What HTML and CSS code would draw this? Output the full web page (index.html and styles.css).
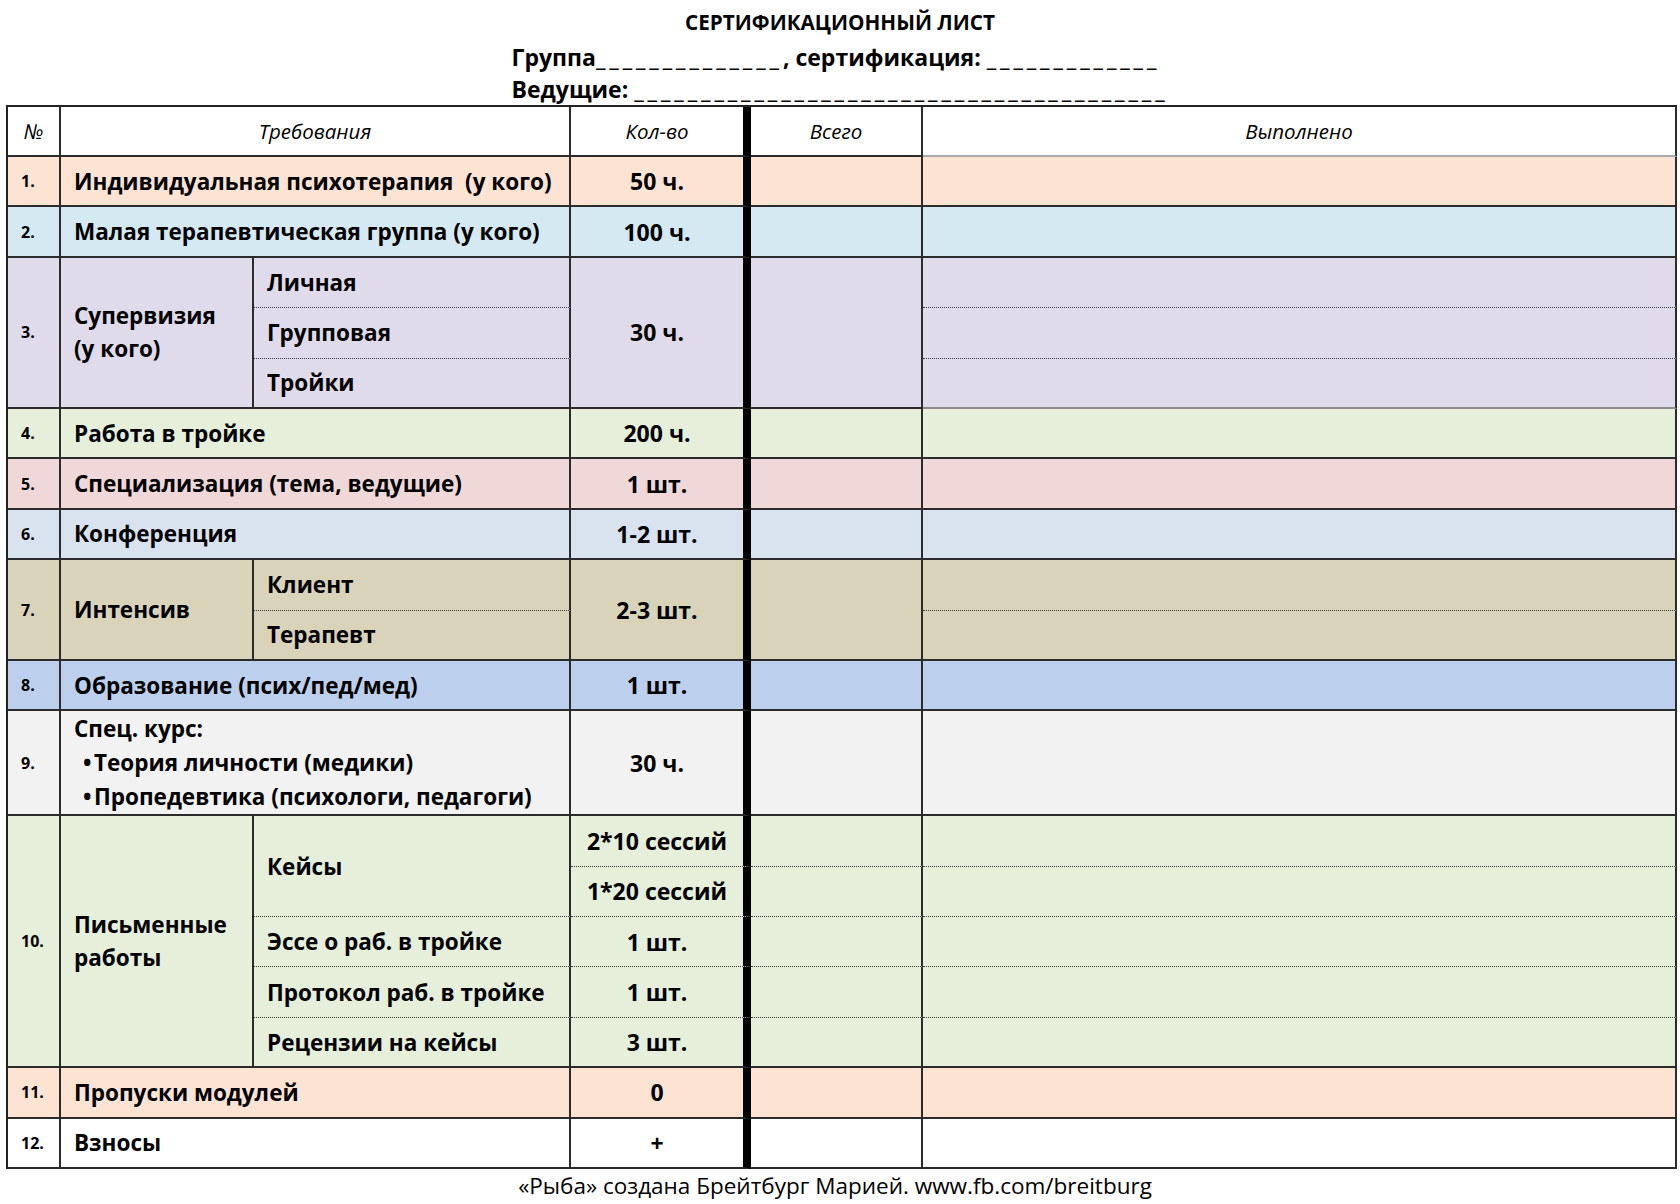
FILE: index.html
```html
<!DOCTYPE html>
<html lang="ru">
<head>
<meta charset="utf-8">
<title>Сертификационный лист</title>
<link rel="stylesheet" href="styles.css">
</head>
<body>
<div class="page">
  <header class="head">
    <h1 class="title">СЕРТИФИКАЦИОННЫЙ ЛИСТ</h1>
    <div class="fields">
      <div class="line">Группа<span class="blank">______________</span>, сертификация: <span class="blank">_____________</span></div>
      <div class="line">Ведущие: <span class="blank">________________________________________</span></div>
    </div>
  </header>

  <div class="sheet">
    <!-- header -->
    <div class="cell hd">№</div>
    <div class="cell hd span2">Требования</div>
    <div class="cell hd qty">Кол-во</div>
    <div class="cell hd">Всего</div>
    <div class="cell hd done-hd">Выполнено</div>

    <!-- 1 -->
    <div class="cell num o">1.</div>
    <div class="cell o span2">Индивидуальная психотерапия&nbsp; (у кого)</div>
    <div class="cell qty o">50 ч.</div>
    <div class="cell o"></div>
    <div class="cell o"></div>

    <!-- 2 -->
    <div class="cell num b">2.</div>
    <div class="cell b span2">Малая терапевтическая группа (у кого)</div>
    <div class="cell qty b">100 ч.</div>
    <div class="cell b"></div>
    <div class="cell b"></div>

    <!-- 3 -->
    <div class="cell num l rs3">3.</div>
    <div class="cell l rs3 wrap">Супервизия<br>(у кого)</div>
    <div class="cell l dot">Личная</div>
    <div class="cell qty l rs3">30 ч.</div>
    <div class="cell l rs3"></div>
    <div class="cell l dot"></div>
    <div class="cell l dot">Групповая</div>
    <div class="cell l dot"></div>
    <div class="cell l">Тройки</div>
    <div class="cell l soft"></div>

    <!-- 4 -->
    <div class="cell num g">4.</div>
    <div class="cell g span2">Работа в тройке</div>
    <div class="cell qty g">200 ч.</div>
    <div class="cell g"></div>
    <div class="cell g"></div>

    <!-- 5 -->
    <div class="cell num p">5.</div>
    <div class="cell p span2">Специализация (тема, ведущие)</div>
    <div class="cell qty p">1 шт.</div>
    <div class="cell p"></div>
    <div class="cell p"></div>

    <!-- 6 -->
    <div class="cell num s">6.</div>
    <div class="cell s span2">Конференция</div>
    <div class="cell qty s">1-2 шт.</div>
    <div class="cell s"></div>
    <div class="cell s"></div>

    <!-- 7 -->
    <div class="cell num t rs2">7.</div>
    <div class="cell t rs2">Интенсив</div>
    <div class="cell t dot">Клиент</div>
    <div class="cell qty t rs2">2-3 шт.</div>
    <div class="cell t rs2"></div>
    <div class="cell t dot"></div>
    <div class="cell t">Терапевт</div>
    <div class="cell t"></div>

    <!-- 8 -->
    <div class="cell num m">8.</div>
    <div class="cell m span2">Образование (псих/пед/мед)</div>
    <div class="cell qty m">1 шт.</div>
    <div class="cell m"></div>
    <div class="cell m"></div>

    <!-- 9 -->
    <div class="cell num y">9.</div>
    <div class="cell y span2 course">
      <div>Спец. курс:</div>
      <div class="bullet"><span class="dotmark">•</span>Теория личности (медики)</div>
      <div class="bullet"><span class="dotmark">•</span>Пропедевтика (психологи, педагоги)</div>
    </div>
    <div class="cell qty y">30 ч.</div>
    <div class="cell y"></div>
    <div class="cell y"></div>

    <!-- 10 -->
    <div class="cell num g rs5">10.</div>
    <div class="cell g rs5 wrap">Письменные<br>работы</div>
    <div class="cell g rs2 dot">Кейсы</div>
    <div class="cell qty g dot">2*10 сессий</div>
    <div class="cell g dot"></div>
    <div class="cell g dot"></div>
    <div class="cell qty g dot">1*20 сессий</div>
    <div class="cell g dot"></div>
    <div class="cell g dot"></div>
    <div class="cell g dot">Эссе о раб. в тройке</div>
    <div class="cell qty g dot">1 шт.</div>
    <div class="cell g dot"></div>
    <div class="cell g dot"></div>
    <div class="cell g dot">Протокол раб. в тройке</div>
    <div class="cell qty g dot">1 шт.</div>
    <div class="cell g dot"></div>
    <div class="cell g dot"></div>
    <div class="cell g">Рецензии на кейсы</div>
    <div class="cell qty g">3 шт.</div>
    <div class="cell g"></div>
    <div class="cell g"></div>

    <!-- 11 -->
    <div class="cell num o">11.</div>
    <div class="cell o span2">Пропуски модулей</div>
    <div class="cell qty o">0</div>
    <div class="cell o"></div>
    <div class="cell o"></div>

    <!-- 12 -->
    <div class="cell num">12.</div>
    <div class="cell span2">Взносы</div>
    <div class="cell qty">+</div>
    <div class="cell"></div>
    <div class="cell"></div>
  </div>

  <footer class="foot">«Рыба» создана Брейтбург Марией. www.fb.com/breitburg</footer>
</div>
</body>
</html>
```

FILE: styles.css
```css
html, body {
  margin: 0;
  padding: 0;
  background: #ffffff;
}

body {
  font-family: "Open Sans", "Noto Sans", "DejaVu Sans", sans-serif;
  color: #000;
}

.page {
  width: 1680px;
}

/* ---------- heading ---------- */
.head {
  text-align: center;
  padding-top: 7px;
}

.title {
  margin: 0;
  font-size: 20.7px;
  font-weight: 700;
  line-height: 30px;
}

.fields {
  display: inline-block;
  text-align: left;
  margin-top: 4px;
  font-size: 23px;
  font-weight: 700;
}

.line {
  height: 32px;
  line-height: 32px;
  white-space: nowrap;
}

.blank {
  letter-spacing: 3.9px;
}

/* ---------- table ---------- */
.sheet {
  margin-left: 6px;
  width: 1671px;
  display: grid;
  grid-template-columns: 53px 193px 317px 180px 172px 754px;
  grid-template-rows: 50px repeat(11, 50.4px) 105px repeat(7, 50.4px);
  border-top: 2px solid #222;
  border-left: 2px solid #222;
  box-sizing: border-box;
}

.cell {
  box-sizing: border-box;
  display: flex;
  align-items: center;
  padding: 0 13px;
  border-right: 2px solid #2b2b2b;
  border-bottom: 2px solid #2b2b2b;
  font-size: 22.5px;
  font-weight: 700;
  white-space: nowrap;
  min-width: 0;
}

.hd {
  font-weight: 400;
  font-style: italic;
  font-size: 20.5px;
  justify-content: center;
  padding: 0;
}

.done-hd {
  border-bottom-color: #a9a9a9;
}

.num {
  font-size: 16px;
  padding: 0 0 0 13px;
}

.qty {
  justify-content: center;
  padding: 0;
  border-right: 8px solid #000;
  font-size: 23px;
}

.hd.qty {
  font-size: 20.5px;
}

.wrap {
  white-space: normal;
  line-height: 33px;
}

.dot {
  border-bottom: 1px dotted #3a3a3a;
}

.soft {
  border-bottom-color: #8c8c8c;
}

.course {
  flex-direction: column;
  align-items: flex-start;
  justify-content: center;
  line-height: 34px;
}

.bullet {
  padding-left: 9px;
}

.dotmark {
  display: inline-block;
  width: 11px;
}

.span2 { grid-column: span 2; }
.rs2 { grid-row: span 2; }
.rs3 { grid-row: span 3; }
.rs5 { grid-row: span 5; }

/* row colours */
.o { background: #fde4d2; }
.b { background: #d5e9f2; }
.l { background: #e0dbea; }
.g { background: #e5efd9; }
.p { background: #f0d8d8; }
.s { background: #d9e3f0; }
.t { background: #d8d3b9; }
.m { background: #bcd0ed; }
.y { background: #f2f2f2; }

/* ---------- footer ---------- */
.foot {
  text-align: center;
  font-size: 22.5px;
  line-height: 34px;
  padding-right: 10px;
}
```
